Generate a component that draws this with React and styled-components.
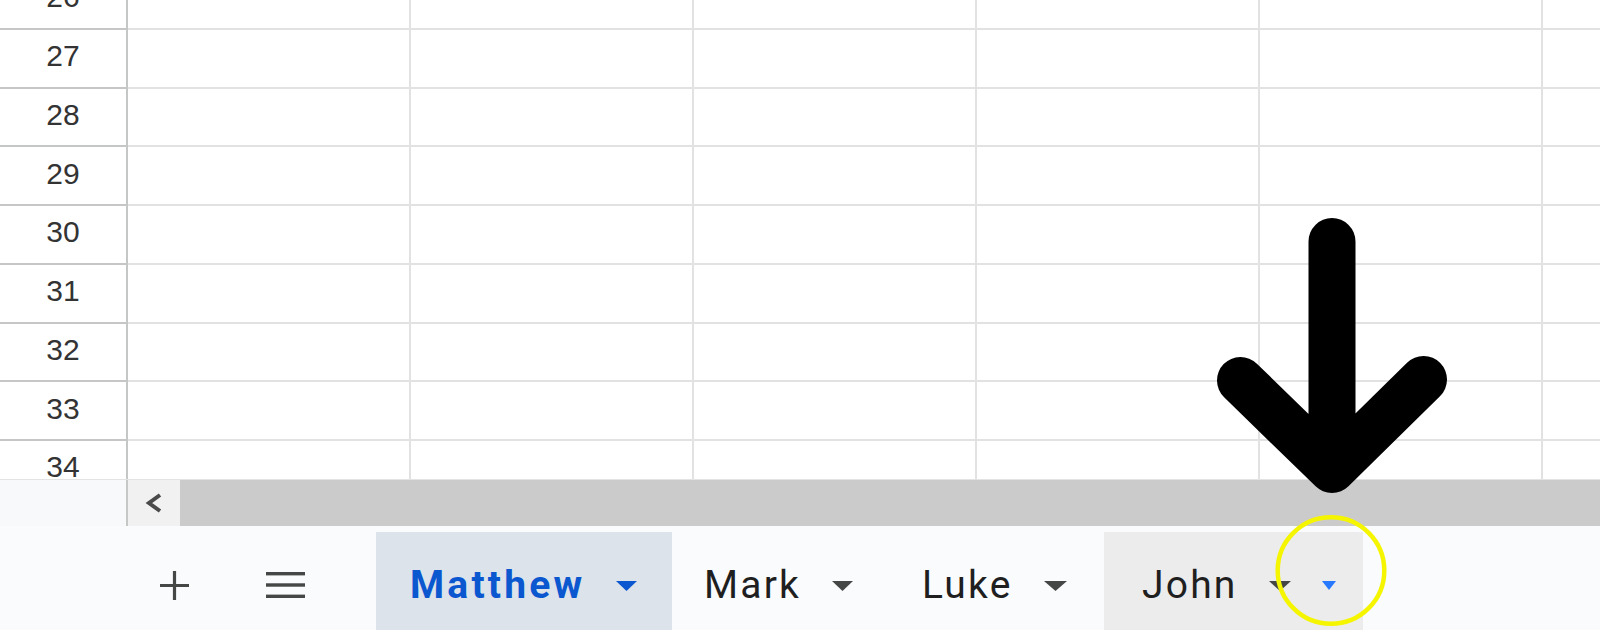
import React from 'react';
import styled, { createGlobalStyle } from 'styled-components';

const Global = createGlobalStyle`
  html, body { margin: 0; padding: 0; overflow: hidden; background: #ffffff; }
  #root { width: 1600px; height: 630px; }
`;

const Page = styled.div`
  position: relative;
  width: 1600px;
  height: 630px;
  overflow: hidden;
  display: flex;
  flex-direction: column;
  font-family: "Liberation Sans", Arial, sans-serif;
`;

const Grid = styled.div`
  flex: none;
  height: 479px;
  overflow: hidden;
`;

const Rows = styled.div`
  margin-top: -29px;
`;

const Row = styled.div`
  display: grid;
  grid-template-columns: 128px repeat(6, 283px);
  height: 58.75px;
`;

const RowHeader = styled.div`
  box-sizing: border-box;
  border-right: 2px solid #c4c7c5;
  border-bottom: 2px solid #c4c7c5;
  background: #ffffff;
  display: flex;
  align-items: center;
  justify-content: center;
  padding-bottom: 4px;
  font-size: 30px;
  color: #333333;
`;

const Cell = styled.div`
  box-sizing: border-box;
  border-right: 2px solid #e2e2e2;
  border-bottom: 2px solid #e2e2e2;
`;

const ScrollRow = styled.div`
  flex: none;
  height: 47px;
  display: flex;
  box-sizing: border-box;
  border-top: 1px solid #e3e3e3;
`;

const Corner = styled.div`
  width: 128px;
  box-sizing: border-box;
  background: #f8f9fa;
  border-right: 2px solid #c4c7c5;
`;

const ScrollButton = styled.div`
  width: 52px;
  background: #f1f1f1;
  display: flex;
  align-items: center;
  justify-content: center;
  color: #4a4a4a;
`;

const Thumb = styled.div`
  flex: 1;
  background: #cbcbcb;
`;

const TabBar = styled.div`
  flex: 1;
  background: #f9fbfd;
  display: flex;
  align-items: stretch;
  padding-top: 6px;
  box-sizing: border-box;
`;

const IconButton = styled.div`
  width: 56px;
  margin-left: ${p => p.$ml}px;
  display: flex;
  align-items: center;
  justify-content: center;
  padding-top: 8px;
  color: #444746;
`;

const TabList = styled.div`
  display: flex;
  margin-left: 63px;
`;

const Tab = styled.div`
  box-sizing: border-box;
  width: ${p => p.$w}px;
  display: flex;
  align-items: center;
  padding: 9px 0 0 ${p => p.$pl || 34}px;
  background: ${p => p.$active ? '#dde3ea' : p.$hover ? '#ececec' : 'transparent'};
  color: ${p => p.$active ? '#0b57d0' : '#1f1f1f'};
`;

const TabName = styled.span`
  font-family: Roboto, "Liberation Sans", Arial, sans-serif;
  font-size: 39px;
  line-height: 1;
  font-weight: ${p => p.$active ? 700 : 400};
  letter-spacing: ${p => p.$active ? '3.2px' : '2.2px'};
  margin-right: 31px;
`;

const Drop = styled.svg`
  display: block;
  flex: none;
  margin-left: ${p => p.$ml || 0}px;
`;

const Overlay = styled.svg`
  position: absolute;
  left: 0;
  top: 0;
  pointer-events: none;
`;

const rowNums = [26, 27, 28, 29, 30, 31, 32, 33, 34];

const DropArrow = ({ color = '#444746', w = 21, h = 10, ml }) => (
  <Drop width={w} height={h} viewBox={`0 0 ${w} ${h}`} $ml={ml}>
    <polygon points={`0,0 ${w},0 ${w / 2},${h}`} fill={color} />
  </Drop>
);

export default function App() {
  return (
    <Page>
      <Global />
      <Grid>
        <Rows>
          {rowNums.map(n => (
            <Row key={n}>
              <RowHeader>{n}</RowHeader>
              {[0, 1, 2, 3, 4, 5].map(c => <Cell key={c} />)}
            </Row>
          ))}
        </Rows>
      </Grid>
      <ScrollRow>
        <Corner />
        <ScrollButton>
          <svg width="20" height="20" viewBox="0 0 20 20">
            <polyline points="16,2 5,10 16,18" fill="none" stroke="currentColor" strokeWidth="4" strokeLinejoin="miter" />
          </svg>
        </ScrollButton>
        <Thumb />
      </ScrollRow>
      <TabBar>
        <IconButton $ml={146}>
          <svg width="29" height="29" viewBox="0 0 29 29">
            <path d="M14.5 0V29M0 14.5H29" stroke="currentColor" strokeWidth="3.2" />
          </svg>
        </IconButton>
        <IconButton $ml={55}>
          <svg width="39" height="26" viewBox="0 0 39 26">
            <rect x="0" y="0" width="39" height="3.4" fill="currentColor" />
            <rect x="0" y="11.3" width="39" height="3.4" fill="currentColor" />
            <rect x="0" y="22.6" width="39" height="3.4" fill="currentColor" />
          </svg>
        </IconButton>
        <TabList>
          <Tab $active $w={296}>
            <TabName $active>Matthew</TabName>
            <DropArrow color="#0b57d0" />
          </Tab>
          <Tab $w={215} $pl={32}>
            <TabName>Mark</TabName>
            <DropArrow />
          </Tab>
          <Tab $w={217} $pl={35}>
            <TabName>Luke</TabName>
            <DropArrow w={23} />
          </Tab>
          <Tab $hover $w={259} $pl={38}>
            <TabName>John</TabName>
            <DropArrow w={22} />
            <DropArrow color="#2979ff" w={14} h={9} ml={31} />
          </Tab>
        </TabList>
      </TabBar>
      <Overlay width="1600" height="630" viewBox="0 0 1600 630">
        <path
          d="M1332 241.5V469.5M1240.5 380.5L1332 469.5L1423.5 379.5"
          fill="none"
          stroke="#000000"
          strokeWidth="47"
          strokeLinecap="round"
          strokeLinejoin="round"
        />
        <circle cx="1331" cy="570.5" r="53.3" fill="none" stroke="#f5f500" strokeWidth="4.5" />
      </Overlay>
    </Page>
  );
}
